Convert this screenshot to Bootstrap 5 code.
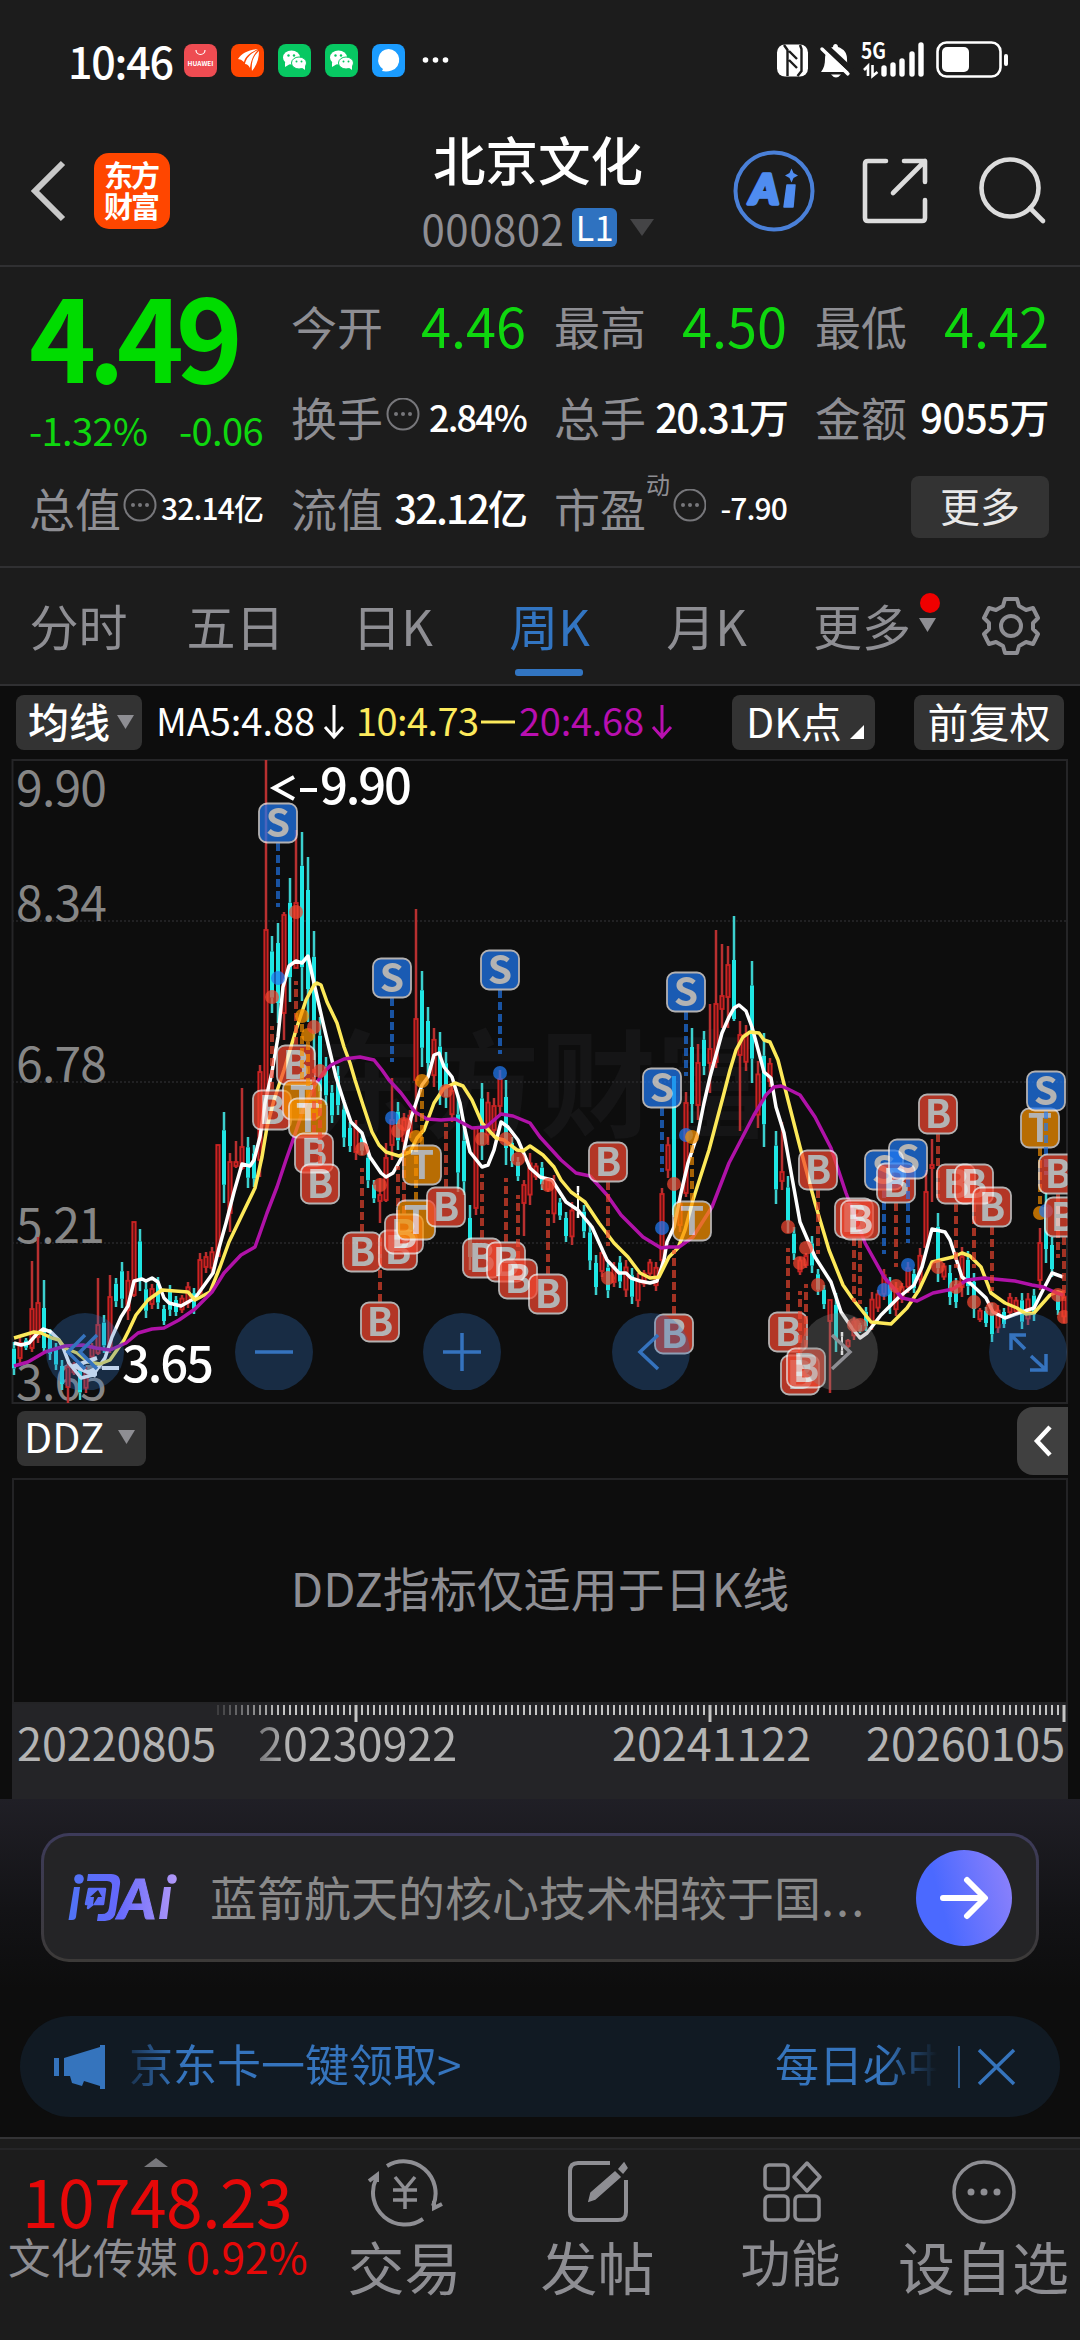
<!DOCTYPE html>
<html lang="zh-CN">
<head>
  <meta charset="UTF-8" />
  <meta name="viewport" content="width=device-width, initial-scale=1.0"/>
  <title>北京文化 000802</title>
  <link href="https://cdn.jsdelivr.net/npm/bootstrap@5.3.0/dist/css/bootstrap.min.css" rel="stylesheet">
  <style>
    body {
      background-color: #0d0d0d;
      color: #fff;
      font-family: "Noto Sans CJK SC", "Noto Sans", sans-serif;
      line-height: 1;
      width: 1080px;
      height: 2340px;
      overflow: hidden;
      white-space: nowrap;
    }
    svg {
      display: block;
      flex: none;
    }
    .panel {
      background-color: #1c1c1c;
    }
    .grey {
      color: #8e8e93;
    }
    .fall {
      color: #0fd70f;
    }
    .rise {
      color: #e60808;
    }
    .med {
      font-weight: 500;
    }

    /* status bar */
    .status-bar {
      height: 120px;
      padding: 0 72px 0 68px;
    }
    .clock {
      font-size: 43px;
      letter-spacing: -1.2px;
      width: 116px;
    }
    .app-dot {
      width: 33px;
      height: 33px;
      margin-right: 14px;
    }

    /* title */
    .title-bar {
      height: 147px;
      padding: 0 33px 0 29px;
      border-bottom: 2px solid #303032;
    }
    .title-side {
      width: 318px;
      height: 142px;
    }
    .stock-name {
      font-size: 52.5px;
      margin-top: 12px;
    }
    .stock-code {
      font-size: 42px;
      letter-spacing: .5px;
      height: 40px;
      margin-top: 23px;
    }
    .level-tag {
      background-color: #2f72c0;
      width: 45px;
      height: 39px;
      font-size: 34px;
      border-radius: 6px;
      color: #fff;
      margin: 0 13px 0 8px;
      padding-bottom: 2px;
    }

    /* quote block */
    .quote-grid {
      display: grid;
      grid-template-columns: 234px 235px 233px 234px;
      grid-template-rows: 91px 91px 91px;
      column-gap: 28px;
      height: 301px;
      padding: 12px 0 0 29px;
      border-bottom: 2px solid #303032;
    }
    .price-box {
      grid-row: span 2;
    }
    .last-price {
      font-size: 114px;
      font-weight: 700;
      color: #00dc00;
      letter-spacing: -8.3px;
      line-height: 114px;
      margin-top: -2px;
    }
    .last-change {
      font-size: 38px;
      margin-top: 20px;
      letter-spacing: -.6px;
    }
    .cell-label {
      font-size: 46px;
      color: #8e8e93;
    }
    .v-lg { font-size: 54px; }
    .v-md { font-size: 40px; letter-spacing: -.5px; }
    .v-dot { letter-spacing: -1.9px; }
    .v-sm { font-size: 36px; letter-spacing: -1.8px; }
    .v-xs { font-size: 30px; letter-spacing: -.9px; }
    .pe-sup {
      font-size: 24px;
      margin-top: -46px;
      color: #8e8e93;
    }
    .more-btn {
      width: 138px;
      height: 62px;
      padding-bottom: 3px;
      border-radius: 8px;
      background-color: #333;
      color: #e8e8e8;
      font-size: 40px;
    }

    /* period tabs */
    .period-tabs {
      height: 118px;
      border-bottom: 2px solid #303032;
      font-size: 49px;
    }
    .period-tab {
      width: 157px;
      height: 116px;
      padding-bottom: 3px;
      color: #8e8e93;
      position: relative;
    }
    .period-tab.active {
      color: #3275c2;
    }
    .period-tab.active::after {
      content: "";
      position: absolute;
      left: 44px;
      top: 101px;
      width: 68px;
      height: 7px;
      border-radius: 3px;
      background-color: #3275c2;
    }
    .red-dot {
      position: absolute;
      left: 135px;
      top: 25px;
      width: 20px;
      height: 20px;
      border-radius: 50%;
      background-color: #f00000;
    }

    /* indicator toolbar */
    .chart-tools {
      height: 72px;
      padding: 0 16px;
      font-size: 38px;
    }
    .tool-btn {
      background-color: #333;
      border-radius: 8px;
      height: 55px;
      padding-bottom: 4px;
      font-size: 41px;
      color: #fff;
    }

    /* DDZ */
    .ddz-head {
      height: 71px;
      padding-left: 17px;
      padding-right: 12px;
    }
    .fold-btn {
      width: 51px;
      height: 68px;
      border-radius: 16px 0 0 16px;
      background-color: #404040;
    }
    .ddz-panel {
      height: 226px;
      margin: 0 12px;
      padding-bottom: 10px;
      border: 2px solid #232325;
      font-size: 47px;
    }
    .ruler {
      height: 95px;
      margin: 0 12px;
      background-color: #242427;
    }
    .ruler-dates {
      font-size: 45px;
      letter-spacing: -.1px;
      color: #b4b4b4;
      margin-top: -5px;
    }
    .date-fade {
      background: linear-gradient(90deg, #77777a, #b4b4b4 30px);
      -webkit-background-clip: text;
      background-clip: text;
      color: transparent;
    }

    /* AI question box */
    .ask-wrap {
      height: 217px;
      padding: 34px 41px 0;
      background: linear-gradient(#201f26, #131316 110px, #0d0d0d 190px);
    }
    .ask-box {
      height: 129px;
      border: 3px solid transparent;
      border-radius: 28px;
      background: linear-gradient(#242426, #242426) padding-box, linear-gradient(#3d3b5a, #3c3a38) border-box;
      padding: 0 24px 0 23px;
    }
    .ask-text {
      font-size: 47px;
      color: #8a8a8a;
      margin-left: 31px;
      padding-bottom: 5px;
    }
    .ask-go {
      width: 96px;
      height: 96px;
      border-radius: 50%;
      background: linear-gradient(75deg, #4b69ff 30%, #9183fb);
    }

    /* notice */
    .notice {
      height: 101px;
      margin: 0 20px;
      border-radius: 51px;
      background-color: #111a23;
      color: #3574bd;
      font-size: 44px;
      padding: 0 43px 0 34px;
    }
    .notice span {
      line-height: 56px;
      margin-bottom: 7px;
    }
    .fade-in-text {
      background: linear-gradient(90deg, #1a3350, #3574bd 48px);
      -webkit-background-clip: text;
      background-clip: text;
      color: transparent;
    }
    .fade-out-text {
      background: linear-gradient(270deg, #111a23 4px, #3574bd 56px);
      -webkit-background-clip: text;
      background-clip: text;
      color: transparent;
      width: 166px;
      overflow: hidden;
    }

    /* bottom bar */
    .bottom-bar {
      height: 204px;
      margin-top: 20px;
      border-top: 2px solid #333335;
    }
    .bottom-inner {
      margin-top: 9px;
      border-top: 2px solid #252527;
      height: 190px;
    }
    .index-box {
      width: 308px;
      padding-left: 8px;
    }
    .index-value {
      font-size: 66px;
      letter-spacing: -.6px;
      padding-left: 14px;
      margin-top: -1px;
    }
    .index-name {
      font-size: 42.5px;
      margin-top: 1px;
      height: 46px;
    }
    .foot-item {
      width: 193px;
      padding-top: 7px;
      color: #8e8e93;
      font-size: 57px;
    }
    .foot-item span {
      margin-top: 8px;
      height: 60px;
      line-height: 60px;
    }
  </style>
</head>
<body>

  <header class="panel">
    <div class="status-bar d-flex align-items-center">
      <div class="clock med">10:46</div>
      <svg class="app-dot" viewBox="0 0 33 33"><rect width="33" height="33" rx="8" fill="#ee4c52"/><path d="M12 6a4.500 4.500 0 0 0 9 0" fill="none" stroke="#fff" stroke-width="1.200"/><text x="16.500" y="21.500" font-size="6.500" font-weight="700" fill="#fff" text-anchor="middle" textLength="26">HUAWEI</text></svg>
      <svg class="app-dot" viewBox="0 0 33 33"><rect width="33" height="33" rx="8" fill="#ff4600"/><path d="M7 15C11 9 17 6 27 5C18 9 14 13 13 18Q10 15 7 15ZM14 20C15 14 20 9 27 6C21 12 20 18 19 24Q17 20 14 20ZM21 27C20 19 22 12 28 7C28 14 26 21 21 27Z" fill="#fff"/></svg>
      <svg class="app-dot" viewBox="0 0 33 33"><rect width="33" height="33" rx="8" fill="#07c862"/><ellipse cx="13.500" cy="13.500" rx="8.500" ry="7" fill="#fff"/><path d="M7 18v5l5-3z" fill="#fff"/><ellipse cx="21" cy="19" rx="7.500" ry="6" fill="#fff" stroke="#07c862"/><path d="M23 23l4 3v-5z" fill="#fff"/><g fill="#07c862"><circle cx="10.500" cy="11.500" r="1.200"/><circle cx="16" cy="11.500" r="1.200"/><circle cx="18.500" cy="17.500" r="1"/><circle cx="23.500" cy="17.500" r="1"/></g></svg>
      <svg class="app-dot" viewBox="0 0 33 33"><rect width="33" height="33" rx="8" fill="#07c862"/><ellipse cx="13.500" cy="13.500" rx="8.500" ry="7" fill="#fff"/><path d="M7 18v5l5-3z" fill="#fff"/><ellipse cx="21" cy="19" rx="7.500" ry="6" fill="#fff" stroke="#07c862"/><path d="M23 23l4 3v-5z" fill="#fff"/><g fill="#07c862"><circle cx="10.500" cy="11.500" r="1.200"/><circle cx="16" cy="11.500" r="1.200"/><circle cx="18.500" cy="17.500" r="1"/><circle cx="23.500" cy="17.500" r="1"/></g></svg>
      <svg class="app-dot" viewBox="0 0 33 33"><rect width="33" height="33" rx="8" fill="#1b9cff"/><path d="M16.500 5a11 11 0 0 1 3 21.500Q15 28 10 27l1-2A11 11 0 0 1 16.500 5Z" fill="#fff"/></svg>
      <svg width="30" height="8" viewBox="0 0 30 8" fill="#fff"><circle cx="6.500" cy="4" r="2.800"/><circle cx="16.500" cy="4" r="2.800"/><circle cx="26.500" cy="4" r="2.800"/></svg>
      <svg class="ms-auto" width="232" height="40" viewBox="776 41 232 40">
        <!-- NFC -->
        <rect x="777" y="45.500" width="31" height="32" rx="8" fill="#fff"/>
        <path d="M784 46L787.500 51V77M800 46L801.500 50V72L797.500 77M789 52L797 60M789 61L797 69" fill="none" stroke="#1c1c1c" stroke-width="2.400"/>
        <!-- muted bell -->
        <path d="M821 73c3-4 4-8 4-13c0-7 4-11 8-12c0-4 5-4 5 0c6 2 9 6 9 12c0 6 1 9 4 13z" fill="#fff"/><path d="M831 75.500h10q-5 6-10 0z" fill="#fff"/>
        <path d="M823 45L852 72" stroke="#1c1c1c" stroke-width="6"/><path d="M822 50L848 75" stroke="#fff" stroke-width="3.500" stroke-linecap="round"/><path d="M846 79L853 72V82Z" fill="#1c1c1c"/>
        <text x="861" y="60" font-size="22" font-weight="700" fill="#fff" textLength="25" lengthAdjust="spacingAndGlyphs">5G</text>
        <path d="M868 77V67l-4 4M872.500 66v11l5-4" fill="none" stroke="#fff" stroke-width="2.600"/>
        <path d="M884 75v-6M893 75v-9M902 75v-13M912 75v-20M921 75v-29" stroke="#fff" stroke-width="5.400" stroke-linecap="round"/>
        <rect x="937.500" y="43.500" width="63" height="34" rx="9" fill="none" stroke="#fff" stroke-width="2.600"/>
        <rect x="942" y="48" width="27" height="25" rx="5" fill="#fff"/>
        <path d="M1006 57v8" stroke="#fff" stroke-width="4" stroke-linecap="round"/>
      </svg>
    </div>

    <div class="title-bar d-flex justify-content-between align-items-start">
      <div class="title-side d-flex align-items-center">
        <svg width="38" height="64" viewBox="0 0 38 64"><path d="M34 4L6 32L34 60" fill="none" stroke="#c8c8c8" stroke-width="6"/></svg>
        <svg class="ms-4" width="80" height="76" viewBox="0 0 80 76"><rect x="3" width="76" height="76" rx="15" fill="#ff4600"/><text x="13" y="34" font-size="29" font-weight="700" fill="#fff" textLength="56">东方</text><text x="13" y="65" font-size="29" font-weight="700" fill="#fff" textLength="56">财富</text></svg>
      </div>
      <div class="d-flex flex-column align-items-center">
        <div class="stock-name med">北京文化</div>
        <div class="stock-code d-flex align-items-center grey">000802<span class="level-tag d-flex align-items-center justify-content-center">L1</span>
          <svg width="24" height="17" viewBox="0 0 24 17"><path d="M0 0H24L12 17Z" fill="#444446"/></svg></div>
      </div>
      <div class="title-side d-flex align-items-center justify-content-end">
        <svg width="316" height="84" viewBox="732 149 316 84" stroke-linecap="round" stroke-linejoin="round">
          <circle cx="775" cy="191" r="38.500" fill="none" stroke="#4a80d8" stroke-width="4"/>
          <text x="751" y="204" font-size="41" font-weight="900" font-style="italic" font-family="Lato, sans-serif" fill="#4f8cf0" stroke="#4f8cf0" stroke-width="3.500" textLength="29" lengthAdjust="spacingAndGlyphs">A</text>
          <path d="M788 185h8l-2 22h-9z" fill="#4f8cf0" stroke="#4f8cf0" stroke-width="1.500"/><path d="M792.500 168.500l2 4.500l4.500 2.500l-4.500 2.500l-2 4.500l-2-4.500l-4.500-2.500l4.500-2.500z" fill="#4f8cf0"/>
          <path d="M887 161h-18q-3 0-3 3v54q0 3 3 3h54q3 0 3-3v-18M905 161h21v21M926 161L894 193" fill="none" stroke="#dcdcdc" stroke-width="4.600"/>
          <circle cx="1011" cy="188" r="28.500" fill="none" stroke="#dcdcdc" stroke-width="4.600"/><path d="M1031 208l13 13" stroke="#dcdcdc" stroke-width="4.600"/>
        </svg>
      </div>
    </div>

    <div class="quote-grid">
      <div class="price-box">
        <div class="last-price">4.49</div>
        <div class="last-change fall d-flex justify-content-between"><span>-1.32%</span><span>-0.06</span></div>
      </div>
      <div class="d-flex align-items-center justify-content-between"><span class="cell-label">今开</span><span class="fall v-lg">4.46</span></div>
      <div class="d-flex align-items-center justify-content-between"><span class="cell-label">最高</span><span class="fall v-lg">4.50</span></div>
      <div class="d-flex align-items-center justify-content-between"><span class="cell-label">最低</span><span class="fall v-lg">4.42</span></div>
      <div class="d-flex align-items-center"><span class="cell-label">换手</span><svg width="40" height="36" viewBox="-20 -16 40 36"><use href="#tip"/></svg><span class="v-sm med ms-auto">2.84%</span></div>
      <div class="d-flex align-items-center justify-content-between"><span class="cell-label">总手</span><span class="v-md v-dot med">20.31万</span></div>
      <div class="d-flex align-items-center justify-content-between"><span class="cell-label">金额</span><span class="v-md med">9055万</span></div>
      <div class="d-flex align-items-center"><span class="cell-label">总值</span><svg width="38" height="36" viewBox="-19 -16 38 36"><use href="#tip"/></svg><span class="v-xs med ms-auto">32.14亿</span></div>
      <div class="d-flex align-items-center justify-content-between"><span class="cell-label">流值</span><span class="v-md v-dot med">32.12亿</span></div>
      <div class="d-flex align-items-center"><span class="cell-label">市盈</span><span class="pe-sup">动</span><svg width="36" height="36" viewBox="-20 -16 36 36"><g id="tip"><circle r="15.500" fill="none" stroke="#77777b" stroke-width="2"/><g fill="#77777b"><circle cx="-7" r="2"/><circle r="2"/><circle cx="7" r="2"/></g></g></svg><span class="v-xs med ms-auto">-7.90</span></div>
      <div class="d-flex align-items-center justify-content-end"><div class="more-btn d-flex align-items-center justify-content-center">更多</div></div>
    </div>

    <nav class="period-tabs d-flex">
      <div class="period-tab d-flex align-items-center justify-content-center">分时</div>
      <div class="period-tab d-flex align-items-center justify-content-center">五日</div>
      <div class="period-tab d-flex align-items-center justify-content-center">日K</div>
      <div class="period-tab active d-flex align-items-center justify-content-center">周K</div>
      <div class="period-tab d-flex align-items-center justify-content-center">月K</div>
      <div class="period-tab d-flex align-items-center ps-4">
        <span class="ms-1">更多</span><svg class="ms-2" width="17" height="14" viewBox="0 0 17 14"><path d="M0 0H17L8.500 14Z" fill="#8e8e93"/></svg>
        <span class="red-dot"></span>
      </div>
      <div class="flex-fill d-flex align-items-center justify-content-center">
        <svg width="60" height="60" viewBox="-30 -30 60 60" fill="none" stroke="#8e8e93" stroke-width="4" stroke-linejoin="round"><path d="M-6-27H6L8-20L15-16L22-18L27-8L22-3V3L27 8L22 18L15 16L8 20L6 27H-6L-8 20L-15 16L-22 18L-27 8L-22 3V-3L-27-8L-22-18L-15-16L-8-20Z"/><circle r="10"/></svg>
      </div>
    </nav>
  </header>

  <div class="chart-tools d-flex align-items-center">
    <div class="tool-btn d-flex align-items-center justify-content-between ps-2 pe-2 med" style="width:126px"><span class="ms-1">均线</span><svg class="mt-1" width="17" height="14" viewBox="0 0 17 14"><path d="M0 0H17L8.500 14Z" fill="#8e8e93"/></svg></div>
    <svg width="590" height="55" viewBox="142 0 590 55" font-size="38">
      <text x="156" y="41" fill="#fff" textLength="159">MA5:4.88</text><path d="M334 10v31M325 32l9 10l9-10" fill="none" stroke="#fff" stroke-width="3"/>
      <text x="356" y="41" fill="#fcea5c" textLength="123">10:4.73</text><path d="M481 27h34" stroke="#fcea5c" stroke-width="3"/>
      <text x="519" y="41" fill="#b80fb0" textLength="125">20:4.68</text><path d="M662 10v31M653 32l9 10l9-10" fill="none" stroke="#b80fb0" stroke-width="3"/>
    </svg>
    <div class="tool-btn d-flex align-items-center" style="width:143px;padding-left:14px"><span>DK点</span><svg class="ms-2 mt-4" width="14" height="14" viewBox="0 0 14 14"><path d="M14 0V14H0Z" fill="#fff"/></svg></div>
    <div class="tool-btn d-flex align-items-center justify-content-center ms-auto" style="width:150px">前复权</div>
  </div>

  <svg id="chart" width="1080" height="649" viewBox="0 -2 1080 649">
    <defs><clipPath id="plot"><rect x="12" y="-2" width="1055.500" height="646"/></clipPath>
    <clipPath id="keys"><rect x="12" y="0" width="1055.500" height="630"/></clipPath></defs>
    <text x="540" y="368" font-size="116" font-weight="700" fill="#151516" text-anchor="middle">东方财富</text>
    <path d="M12 161H1067M12 322H1067M12 483H1067" stroke="#29292b" stroke-width="1.500" stroke-dasharray="2 2"/>
    <rect x="12.500" y="0" width="1054.500" height="643" fill="none" stroke="#252527" stroke-width="2"/>
    <g font-size="48" fill="#868686">
      <text x="16" y="46" textLength="91">9.90</text>
      <text x="16" y="161" textLength="91">8.34</text>
      <text x="16" y="322" textLength="91">6.78</text>
      <text x="16" y="483" textLength="89">5.21</text>
      <text x="16" y="640" textLength="91">3.65</text>
    </g>
    <g id="candles" clip-path="url(#plot)"></g>
    <g id="averages" fill="none" stroke-width="3.500" stroke-linejoin="round">
      <polyline stroke="#fff" points="14,583 21,585 29,583 36,575 43,569 51,572 59,580 64,590 69,603 81,618 93,615 105,598 112,577 121,557 128,546 134,521 142,519 146,521 152,518 158,522 164,538 169,543 181,546 195,538 203,527 213,513 219,488 226,463 234,432 242,404 250,406 254,400 260,377 265,343 272,312 278,277 283,227 289,206 296,201 302,203 308,196 314,223 324,267 336,317 344,342 351,362 362,373 370,397 381,413 386,417 393,413 403,395 411,358 422,325 428,317 434,295 439,293 444,307 452,317 460,343 465,370 470,392 482,407 488,405 494,390 501,362 508,367 518,380 530,408 540,417 552,420 566,442 578,450 592,467 607,500 619,513 626,513 631,518 640,521 650,523 657,521 664,500 667,482 674,467 681,433 688,403 698,373 704,343 710,317 722,273 729,257 734,248 739,245 746,251 752,267 759,293 764,312 771,318 776,347 784,373 800,462 815,497 831,522 841,552 852,568 860,578 867,573 881,555 898,538 914,525 922,507 932,469 945,472 950,480 962,517 970,523 986,538 993,552 1005,558 1022,552 1034,548 1043,530 1052,513 1063,517"/>
      <polyline stroke="#fde95a" points="14,578 34,572 41,573 52,578 59,580 65,588 77,593 88,602 100,604 110,600 124,580 129,570 136,555 148,540 162,530 188,532 195,540 210,532 220,507 229,482 241,457 255,428 262,397 267,367 274,340 284,310 296,270 306,240 314,225 317,223 321,225 327,242 337,263 344,287 350,303 355,320 363,345 372,372 379,385 386,392 399,396 410,392 417,378 424,370 434,343 444,328 455,323 463,326 472,340 482,363 496,378 504,380 517,390 523,391 530,386 543,395 554,407 561,420 571,432 585,442 599,463 614,483 628,497 640,513 650,518 659,517 669,497 678,488 685,470 693,440 709,390 723,337 730,310 736,290 743,277 750,272 759,273 764,280 770,282 778,300 783,320 788,340 800,387 815,443 829,490 843,525 852,538 871,562 891,564 907,548 919,530 932,502 953,497 962,493 970,496 981,507 991,533 1005,543 1017,548 1026,554 1034,553 1050,535 1057,532 1063,533"/>
      <polyline stroke="#b012a8" points="14,606 28,602 45,592 65,586 83,585 96,588 110,590 126,583 138,573 152,569 164,568 179,560 195,549 212,532 224,513 241,495 255,487 260,473 267,453 277,427 286,400 293,380 303,350 315,325 324,312 331,305 344,299 360,297 374,300 382,310 389,320 401,333 415,352 427,359 441,360 455,359 472,368 486,367 501,354 513,356 530,363 540,377 561,400 576,413 590,416 607,435 621,455 643,477 661,488 669,487 679,487 693,477 712,447 729,403 754,355 766,335 774,327 781,326 788,329 800,335 815,357 831,388 846,433 865,483 884,517 902,538 917,541 933,533 953,529 967,520 984,518 1015,521 1032,525 1043,527 1057,533 1063,535"/>
    </g>
    <g id="signals" clip-path="url(#plot)" font-size="39" font-weight="500" text-anchor="middle"></g>
    <g font-size="49" font-weight="500" fill="#fff">
      <path d="M294 17L274 28L294 39M300 30H317" fill="none" stroke="#fff" stroke-width="4"/>
      <text x="320" y="44" textLength="92">9.90</text>
      <path d="M97 598L74 606L96 616M102 608H119" fill="none" stroke="#fff" stroke-width="4"/><path d="M86 611L97 606V616Z"/>
      <text x="122" y="622" textLength="92">3.65</text>
    </g>
    <g clip-path="url(#keys)" fill="#3273c3" fill-opacity=".3">
      <circle cx="85" cy="592" r="39"/><circle cx="274" cy="592" r="39"/><circle cx="462" cy="592" r="39"/>
      <circle cx="651" cy="592" r="39"/><circle cx="839" cy="592" r="39" fill="#888"/><circle cx="1028" cy="592" r="39"/>
    </g>
    <g fill="none" stroke="#3573be" stroke-width="3.500">
      <path d="M85 575L68 592L85 609M97 575L80 592L97 609"/>
      <path d="M255 592H293M443 592H481M462 573V611"/>
      <path d="M658 575L640 592L658 609"/>
      <path d="M832 575L850 592L832 609" stroke="#8e8e93"/>
      <path d="M1011 590V575H1026M1011 575L1025 589M1030 610H1046V594M1046 610L1031 596"/>
    </g>
  </svg>

  <div class="ddz-head d-flex justify-content-between">
    <div class="tool-btn d-flex align-items-center justify-content-between mt-1" style="width:129px;padding:0 11px 7px 7px"><span>DDZ</span><svg class="mt-1" width="17" height="14" viewBox="0 0 17 14"><path d="M0 0H17L8.500 14Z" fill="#8e8e93"/></svg></div>
    <div class="fold-btn d-flex align-items-center justify-content-center"><svg width="20" height="34" viewBox="0 0 20 34"><path d="M17 3L4 17L17 31" fill="none" stroke="#fff" stroke-width="4.500"/></svg></div>
  </div>
  <div class="ddz-panel d-flex align-items-center justify-content-center grey">DDZ指标仅适用于日K线</div>
  <div class="ruler">
    <svg id="ticks" width="1056" height="20" viewBox="12 0 1056 20"></svg>
    <div class="ruler-dates d-flex">
      <span style="margin-left:5px;width:241px">20220805</span><span style="width:354px"><span class="date-fade">20230922</span></span><span style="width:254px">20241122</span><span>20260105</span>
    </div>
  </div>

  <div class="ask-wrap">
    <div class="ask-box d-flex align-items-center">
      <svg width="112" height="50" viewBox="0 0 112 50">
        <defs><linearGradient id="askFill" gradientUnits="userSpaceOnUse" x1="0" y1="0" x2="112" y2="0"><stop offset="0" stop-color="#4f74f5"/><stop offset=".45" stop-color="#6468fb"/><stop offset="1" stop-color="#b49af8"/></linearGradient></defs>
        <g fill="url(#askFill)">
          <circle cx="12" cy="6" r="4.800"/><circle cx="105" cy="6" r="4.800"/>
          <path d="M7 14h6L9 44q-.5 3-4 3H1.500zM97 14h7l-4 32h-8zM21 1h23q10 0 9 10L49 37q-1 11-11 11h-8l1-7h4q6 0 7-6l3-21q1-6-5-6H20z"/>
          <path d="M22 16h16l-2 15H26l-5 4l1-4h-3z" stroke="url(#askFill)" stroke-width="2.500" stroke-linejoin="round"/>
        </g>
        <path d="M23 24l8-7l4 7h-4l-5 8l1-8z" fill="#242426"/>
        <text x="51" y="46" font-size="56" font-weight="900" font-style="italic" font-family="Lato, sans-serif" fill="url(#askFill)" stroke="url(#askFill)" textLength="38" lengthAdjust="spacingAndGlyphs">A</text>
      </svg>
      <div class="ask-text">蓝箭航天的核心技术相较于国<span style="letter-spacing:2px">...</span></div>
      <div class="ask-go d-flex align-items-center justify-content-center ms-auto"><svg width="50" height="44" viewBox="0 0 50 44"><path d="M4 22H44M28 4L46 22L28 40" fill="none" stroke="#fff" stroke-width="6" stroke-linecap="round" stroke-linejoin="round"/></svg></div>
    </div>
  </div>

  <div class="notice d-flex align-items-center">
    <svg width="52" height="44" viewBox="0 0 52 44" fill="#3574bd"><path d="M0 13H5V31H0ZM10 13L46 2V0H51V44H46V41L30 36L28 41L18 38L16 31H10Z"/></svg>
    <span class="fade-in-text" style="margin-left:23px">京东卡一键领取&gt;</span>
    <span class="fade-out-text ms-auto">每日必中</span>
    <svg class="ms-3" width="60" height="42" viewBox="0 0 60 42" fill="none" stroke="#3574bd"><path d="M2 0V42" stroke-width="1.500"/><path d="M22 4L57 38M57 4L22 38" stroke-width="3.500"/></svg>
  </div>

  <footer class="bottom-bar panel">
    <div class="bottom-inner d-flex">
      <div class="index-box">
        <svg class="mt-2" style="margin-left:136px" width="24" height="9" viewBox="0 0 24 9"><path d="M12 0L24 9H0Z" fill="#77777b"/></svg>
        <div class="index-value rise">10748.23</div>
        <div class="index-name d-flex align-items-center"><span class="grey">文化传媒</span><span class="rise ms-2">0.92%</span></div>
      </div>
      <div class="foot-item d-flex flex-column align-items-center">
        <svg width="76" height="70" viewBox="-38 -35 76 70" fill="none" stroke="#8e8e93" stroke-width="4"><path d="M-18-26A32 32 0 0 1 28 14M18 27A32 32 0 0 1-29-13M-36-11L-28-17V-10M37 12L29 16V9"/><path d="M-10-15L0-3L10-15M0-3V17M-12-2H12M-12 8H12" stroke-width="3.500"/></svg>
        <span>交易</span>
      </div>
      <div class="foot-item d-flex flex-column align-items-center">
        <svg width="76" height="70" viewBox="-38 -35 76 70" fill="none" stroke="#8e8e93" stroke-width="4"><path d="M12-29H-20Q-28-29-28-21V20Q-28 28-20 28H20Q28 28 28 20V-12"/><path d="M-9 9L-7 1L17-20L22-15L-3 7ZM21-23L26-29L29-24L25-19Z" fill="#8e8e93" stroke-width="1.500"/></svg>
        <span>发帖</span>
      </div>
      <div class="foot-item d-flex flex-column align-items-center">
        <svg width="76" height="70" viewBox="-38 -35 76 70" fill="none" stroke="#8e8e93" stroke-width="3.500"><rect x="-26" y="-27" width="23" height="24" rx="4"/><rect x="-26" y="4" width="23" height="24" rx="4"/><rect x="4" y="4" width="24" height="24" rx="4"/><path d="M16-29L29-15L16-1L3-15Z" stroke-linejoin="round"/></svg>
        <span style="font-size:50px;margin-top:3px">功能</span>
      </div>
      <div class="foot-item d-flex flex-column align-items-center">
        <svg width="76" height="70" viewBox="-38 -35 76 70"><circle r="30" fill="none" stroke="#8e8e93" stroke-width="3.500"/><g fill="#8e8e93"><circle cx="-13" r="3.500"/><circle r="3.500"/><circle cx="13" r="3.500"/></g></svg>
        <span>设自选</span>
      </div>
    </div>
  </footer>

  <script src="https://cdn.jsdelivr.net/npm/bootstrap@5.3.0/dist/js/bootstrap.bundle.min.js"></script>
  <script>
    // one weekly bar each: direction, high, low, optional body top and bottom (chart units)
    const bars = `c 582 615|r 578 603|c 578 590|r 501 592 549 588|r 477 583 543 577|c 520 593 548 588|c 569 600|c 583 610|c 600 630|r 600 643 607 627
c|r 602 615|c 602 640|r 607 633|r 583 600|r 518 595 565 593|c 555 593|r 515 593 537 590|c 518 547|c 502 548|r 511 560
c|r 462 537 462 535|c 469 531|c 522 558|r 524 549|c 517 549|c 545 565|c 525 556|c 536 556|r 535 553|r 522 548
c|c 528 554|r 493 535 500 533|r 492 513 497 507|r 487 513|r 385 497 385 496|c 352 443|r 393 472 402 453|r 381 408 402 406|r 328 410 387 408|c 377 428
c|c 385 427|r 305 417 312 400|r 0 366 170 330|c 176 253|c 163 263|r 152 280 155 253|c 118 242|r 70 208 143 208|c 72 241|c 97 262
c|c 171 300|c 257 350|c 297 345|c 325 363|c 306 355|c 340 387|c 362 392|r 360 400|c 374 395|c 390 428
c|c 420 443|r 418 463 435 441|r 383 442 398 440|r 318 400 360 385|c 342 390|r 353 388|r 350 378|r 149 362 259 320|c 211 307|c 247 317
c|r 268 327|c 272 345|c 292 348|r 323 362|c 335 432|c 367 435|c 445 510|r 368 455 368 448|c 323 400|r 332 385
c|r 338 378|r 310 355|c 320 405|c 377 407|c 397 421|r 420 476 425 443|r 393 445|r 403 420|c 402 430|r 418 432
c|r 415 463|c 438 460|c 452 482|r 442 485|w 426 458|c 445 478|c 463 510|c 495 535|r 487 517|c 500 538
c|r 502 527|c 496 528|r 500 537|c 508 544|r 513 547|r 510 527|r 499 517|r 502 531|r 428 507 434 500|r 377 418
c|c 316 457 316 455|r 437 472|r 332 437 343 433|c 268 363|r 284 360 303 345|c 271 315|r 244 333 289 303|r 170 308 244 302|r 184 268 236 249|r 186 268 205 237
c|c 156 261 200 259|r 261 371 275 295|r 265 311|c 201 323|r 301 368|c 273 387|r 298 327|c 371 444|r 362 430 412 421|c 416 473
c|c 467 500|r 497 515|r 493 508|c 476 513|c 509 535|c 525 549|r 540 633 540 561|c 533 592|w 572 595|r 579 588
c|r 557 580|c 563 573|c 547 571|r 532 570|r 530 552|r 509 540|c 517 554|r 522 556|r 523 543|r 502 533
c|c 509 533|r 488 527|r 410 487 432 487|r 379 442 405 408|c 453 522|r 503 520|c 505 545|c 518 548|r 487 537|c 491 535
c|c 513 558|r 548 562|c 547 567|c 543 582|r 545 573|c 548 568|r 533 557|r 537 555|c 533 569|r 533 565
c|c 529 561|r 468 530 483 520|c 433 503|c 477 517|c 530 555|r 530 563`.replace(/\nc\|/g, "|").split("|");

    const colors = { r: ["#b83030", "#cc2222"], c: ["#3cd0ce", "#1fe6e4"], w: ["#fff", "#fff"] };
    document.getElementById("candles").innerHTML = bars.map((row, i) => {
      const [kind, ...nums] = row.split(" ");
      const [high, low] = nums.map(Number);
      const top = Number(nums[2] || high + (low - high) * 0.2);
      const bottom = Number(nums[3] || low - (low - high) * 0.2);
      const x = 14 + i * 6;
      const wick = `<path d="M${x} ${high}V${top}M${x} ${bottom}V${low}" stroke="${colors[kind][0]}" stroke-width="2.500"/>`;
      if (kind === "r") {
        return wick + `<rect x="${x - 1.7}" y="${top}" width="3.400" height="${bottom - top}" fill="#5a1414" stroke="${colors.r[1]}" stroke-width="1.800"/>`;
      }
      return wick + `<path d="M${x} ${top}V${bottom}" stroke="${colors[kind][1]}" stroke-width="${kind === "w" ? 2 : 4}"/>`;
    }).join("");

    // signal letter, x, badge centre, dot
    const signals = [
      ["S", 278, 63, 218], ["B", 272, 350, 237], ["B", 296, 305, 152], ["T", 302, 340, 256], ["T", 308, 358, 275],
      ["B", 314, 393, 267], ["B", 320, 424, 311], ["B", 362, 492, 389], ["B", 380, 562, 425], ["S", 392, 218, 358],
      ["B", 398, 490, 371], ["B", 404, 474, 364], ["T", 416, 460, 377], ["T", 422, 405, 321], ["B", 446, 447, 331],
      ["B", 482, 498, 379], ["S", 500, 210, 313], ["B", 506, 502, 379], ["B", 518, 519, 399], ["B", 548, 534, 425],
      ["B", 608, 402, 518], ["S", 662, 328, 468], ["B", 674, 574, 424], ["S", 686, 232, 375], ["T", 692, 461, 377],
      ["B", 788, 572, 467], ["B", 800, 615, 503], ["B", 806, 608, 488], ["B", 818, 410, 525], ["B", 854, 458, 565],
      ["B", 860, 460, 565], ["S", 884, 410, 530], ["B", 896, 423, 526], ["S", 908, 399, 505], ["B", 938, 354, 507],
      ["B", 956, 424, 527], ["B", 974, 424, 542], ["B", 992, 447, 549], ["T", 1040, 368, 453], ["S", 1046, 331, 451],
      ["B", 1058, 414, 535], ["B", 1064, 457, 557]
    ];
    const fills = { B: "#f34730", S: "#2079f3", T: "#fb9200" };
    document.getElementById("signals").innerHTML = signals.map(([letter, x, y, dot]) => {
      const dir = dot > y ? 1 : -1;
      return `<g opacity=".72" fill="${fills[letter]}">
        <circle cx="${x}" cy="${dot}" r="7"/>
        <path d="M${x} ${y + dir * 20}V${y + dir * 84}" stroke="${fills[letter]}" stroke-opacity=".9" stroke-width="4" stroke-dasharray="8 4"/>
        <rect x="${x - 19}" y="${y - 19.5}" width="38" height="39" rx="8" stroke="#f4f0f0" stroke-width="1.800"/>
        <text x="${x}" y="${y + 14}" fill="#f4f4f4" font-weight="700">${letter}</text></g>`;
    }).join("");

    // ruler ticks, fading in at the left edge
    let ticks = "";
    for (let x = 218; x <= 1065; x += 6) {
      const major = [356, 710, 1064].includes(x);
      const alpha = Math.min(1, (x - 206) / 75);
      ticks += `<path d="M${x} 1V${major ? 18 : 11}" stroke="#c4c4c4" stroke-opacity="${alpha}" stroke-width="${major ? 3 : 2}"/>`;
    }
    document.getElementById("ticks").innerHTML = ticks;
  </script>

</body>
</html>
